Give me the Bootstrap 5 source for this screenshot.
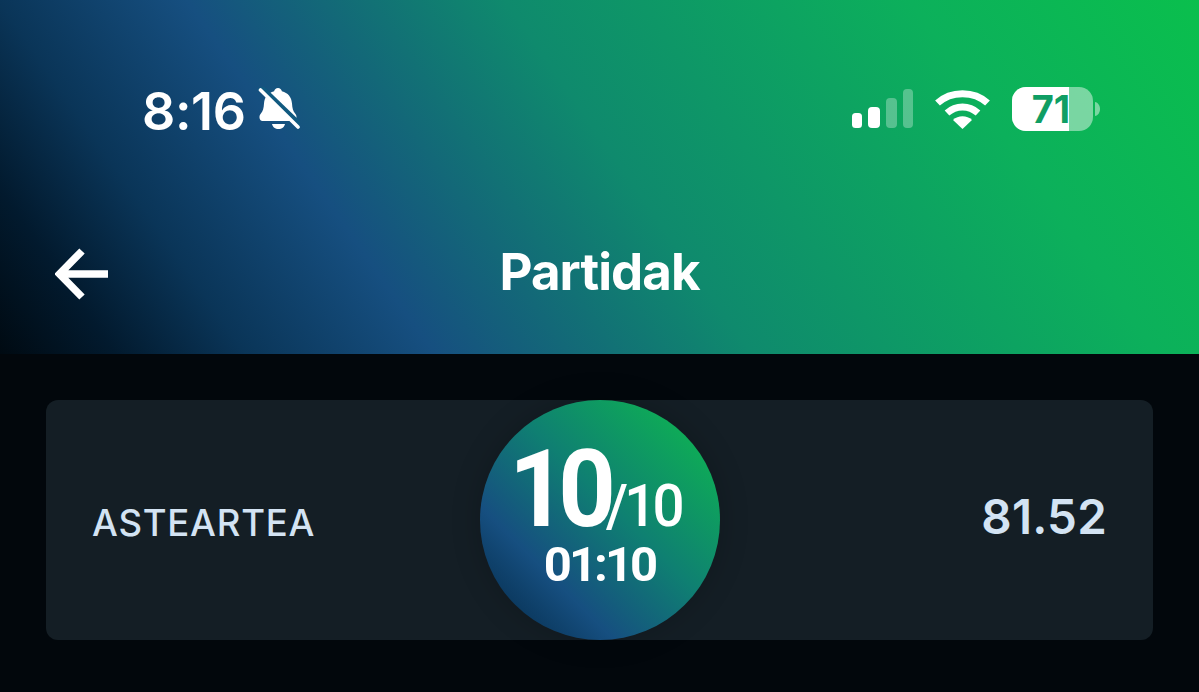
<!doctype html>
<html lang="eu">
<head>
<meta charset="utf-8">
<title>Partidak</title>
<link href="https://cdn.jsdelivr.net/npm/bootstrap@5.3.0/dist/css/bootstrap.min.css" rel="stylesheet">
<style>
html,body{height:100%}
body{background:#02070c;font-family:Inter,Roboto,"Liberation Sans",sans-serif;overflow:hidden;color:#fff}
.topband{height:354px;background:linear-gradient(55deg,#000a12 0%,#021a2e 8%,#0a3558 17%,#164f80 30%,#0f8a6d 52%,#0cb05b 80%,#0abf4d 100%)}
.statusrow{height:220px;padding:87px 99px 0 142px;align-items:flex-start}
.clock{font-weight:600;font-size:52px;line-height:46px;letter-spacing:-.4px;padding-top:2px}
.bellgap{gap:12px}
.icongap{gap:22px}
.titlerow{height:134px;position:relative;padding-top:21px}
.pagetitle{font-size:51px;font-weight:700;line-height:62px;margin:0;letter-spacing:-.95px}
.titleside{flex:1 1 0;display:flex;padding-left:55px;padding-top:7px}
.panelwrap{padding:46px}
.scorepanel{height:240px;background:#141e25;border-radius:12px;padding:0 46px}
.sideitem{flex:1 1 0;color:#d3e3f3}
.lbl{font-size:36.5px;font-weight:500;letter-spacing:.75px;padding-top:6px}
.val{font-size:47.5px;font-weight:600;letter-spacing:.2px;padding-bottom:6px}
.disc{width:240px;height:240px;border-radius:50%;background:linear-gradient(45deg,#000a12 0%,#0c3b62 15%,#164f80 28%,#0f7f72 55%,#0eb054 90%);flex:none;box-shadow:0 0 30px rgba(0,0,0,.2);font-family:Roboto,sans-serif}
.scoreline{display:flex;align-items:baseline;margin-top:42px;height:95px;padding-right:10px}
.big{font-size:108px;font-weight:700;letter-spacing:-9px;line-height:95px;display:inline-block;transform:scaleX(.93);transform-origin:left bottom;margin-right:-9px}
.small-total{font-size:60px;font-weight:500;line-height:1;letter-spacing:-4px;margin-left:0;display:inline-block;transform:scaleX(.94);transform-origin:left bottom;margin-right:-5px}
.timer{font-size:49px;font-weight:700;line-height:50px;margin-top:3px;letter-spacing:-3px}
</style>
</head>
<body>
<header class="topband">
  <div class="statusrow d-flex justify-content-between">
    <div class="d-flex align-items-start bellgap">
      <span class="clock">8:16</span>
      <svg width="42" height="44" viewBox="0 0 42 44" fill="#fff" aria-hidden="true">
        <path d="M20 1c2 0 3.500 1.300 3.900 3.200C30 5.700 33.500 10 34 16.500c.3 4.600 1 7.800 3.300 10.200 2.100 2.200 1.400 7.300-1.800 7.300H4.500c-3.200 0-3.900-5.100-1.800-7.300C5 24.300 5.700 21.100 6 16.500 6.500 10 10 5.700 16.100 4.200 16.500 2.300 18 1 20 1z"/>
        <path d="M14 37h13c-.6 3-3.200 5-6.500 5s-5.900-2-6.500-5z"/>
        <path d="M2 0 43 39.500" stroke="#115a80" stroke-width="6.500"/>
        <path d="M2.500 3 40 40" stroke="#fff" stroke-width="3.600" stroke-linecap="round"/>
      </svg>
    </div>
    <div class="d-flex align-items-start icongap">
      <svg width="61" height="44" viewBox="0 0 61 44" aria-hidden="true">
        <rect x="0" y="26" width="10" height="15" rx="3.500" fill="#fff"/>
        <rect x="16" y="20" width="12" height="21" rx="4" fill="#fff"/>
        <rect x="34" y="11" width="11" height="30" rx="4" fill="#fff" opacity=".3"/>
        <rect x="51" y="2" width="10" height="39" rx="4" fill="#fff" opacity=".3"/>
      </svg>
      <svg width="55" height="44" viewBox="0 0 55 44" fill="none" stroke="#fff" stroke-width="7" aria-hidden="true">
        <path d="M2.500 16C16 3.500 39 3.500 52.500 16"/>
        <path d="M12 26c9-8 22-8 31 0"/>
        <path d="M18 33 27.500 42 37 33c-5-5-14-5-19 0z" fill="#fff" stroke="none"/>
      </svg>
      <svg width="88" height="44" viewBox="0 0 88 44" aria-hidden="true">
        <rect x="0" y="0" width="81" height="44" rx="14" fill="#fff" opacity=".45"/>
        <path d="M14 0h43v44H14A14 14 0 0 1 0 30V14A14 14 0 0 1 14 0z" fill="#fff"/>
        <path d="M83 15c3 .5 5 3.500 5 7s-2 6.500-5 7z" fill="#fff" opacity=".45"/>
        <text x="39" y="36" text-anchor="middle" font-family="Inter,Roboto,sans-serif" font-weight="700" font-size="38" fill="#0f9e64">71</text>
      </svg>
    </div>
  </div>
  <div class="titlerow d-flex align-items-start">
    <div class="titleside">
      <svg width="54" height="52" viewBox="0 0 54 52" fill="none" stroke="#fff" stroke-width="7.500" aria-hidden="true">
        <path d="M27 3 4.500 26 27 49M5 26H53"/>
      </svg>
    </div>
    <h1 class="pagetitle">Partidak</h1>
    <div class="titleside"></div>
  </div>
</header>
<main class="panelwrap">
  <section class="scorepanel d-flex align-items-center">
    <div class="sideitem lbl">ASTEARTEA</div>
    <div class="disc d-flex flex-column align-items-center">
      <div class="scoreline"><span class="big">10</span><span class="small-total">/10</span></div>
      <div class="timer">01:10</div>
    </div>
    <div class="sideitem val text-end">81.52</div>
  </section>
</main>
<script src="https://cdn.jsdelivr.net/npm/bootstrap@5.3.0/dist/js/bootstrap.bundle.min.js"></script>
</body>
</html>
